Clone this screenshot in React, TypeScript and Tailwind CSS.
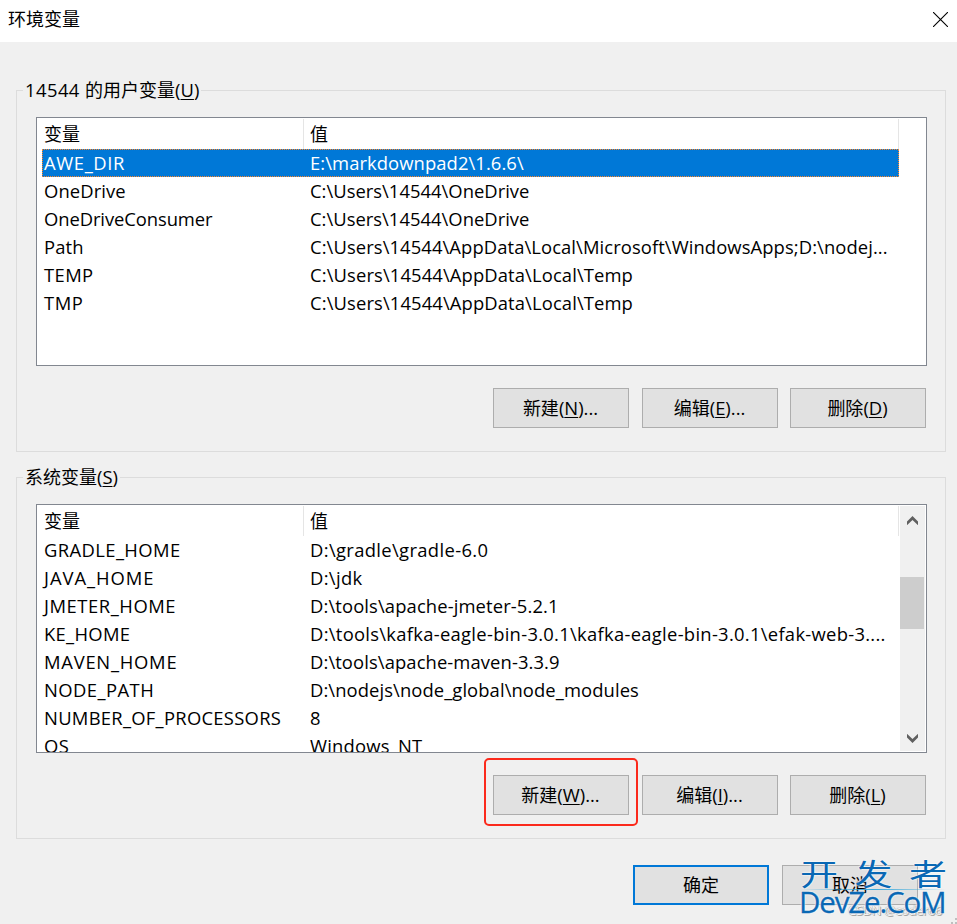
import type { ReactNode } from "react";
import clsx from "clsx";

interface EnvVar {
    name: string;
    nameClass?: string;
    value: string;
    valueClass?: string;
    selected?: boolean;
}

const userVars: EnvVar[] = [
    { name: "AWE_DIR", nameClass: "tracking-[0.6px]", value: "E:\\markdownpad2\\1.6.6\\", valueClass: "tracking-[0.08px]", selected: true },
    { name: "OneDrive", nameClass: "tracking-[0.1px]", value: "C:\\Users\\14544\\OneDrive", valueClass: "tracking-[0.02px]" },
    { name: "OneDriveConsumer", nameClass: "tracking-[-0.08px]", value: "C:\\Users\\14544\\OneDrive", valueClass: "tracking-[0.02px]" },
    { name: "Path", nameClass: "tracking-[0.15px]", value: "C:\\Users\\14544\\AppData\\Local\\Microsoft\\WindowsApps;D:\\nodej...", valueClass: "tracking-[0.09px]" },
    { name: "TEMP", nameClass: "tracking-[0.4px]", value: "C:\\Users\\14544\\AppData\\Local\\Temp", valueClass: "tracking-[0.12px]" },
    { name: "TMP", nameClass: "tracking-[0.6px]", value: "C:\\Users\\14544\\AppData\\Local\\Temp", valueClass: "tracking-[0.12px]" },
];

const systemVars: EnvVar[] = [
    { name: "GRADLE_HOME", nameClass: "tracking-[0.4px]", value: "D:\\gradle\\gradle-6.0", valueClass: "tracking-[0.35px]" },
    { name: "JAVA_HOME", nameClass: "tracking-[0.95px]", value: "D:\\jdk", valueClass: "tracking-[0.33px]" },
    { name: "JMETER_HOME", nameClass: "tracking-[0.55px]", value: "D:\\tools\\apache-jmeter-5.2.1", valueClass: "tracking-[0.12px]" },
    { name: "KE_HOME", nameClass: "tracking-[0.3px]", value: "D:\\tools\\kafka-eagle-bin-3.0.1\\kafka-eagle-bin-3.0.1\\efak-web-3....", valueClass: "tracking-[0.29px]" },
    { name: "MAVEN_HOME", nameClass: "tracking-[0.75px]", value: "D:\\tools\\apache-maven-3.3.9", valueClass: "tracking-[0.1px]" },
    { name: "NODE_PATH", nameClass: "tracking-[0.45px]", value: "D:\\nodejs\\node_global\\node_modules", valueClass: "tracking-[0.09px]" },
    { name: "NUMBER_OF_PROCESSORS", nameClass: "tracking-[0.28px]", value: "8" },
    { name: "OS", nameClass: "tracking-[0.5px]", value: "Windows_NT", valueClass: "tracking-[0.22px]" },
];

function VarList({ vars, scrollbar }: { vars: EnvVar[]; scrollbar?: boolean }) {
    return (
        <div className="flex h-[249px] overflow-hidden border border-[#828790] bg-white pt-px pl-[5px]">
            <div className="w-[857px] shrink-0">
                {/* 表头 */}
                <div className="flex h-[30px] items-center border-r border-[#e5e5e5] leading-[30px]">
                    <div className="w-[261px] pl-0.5">变量</div>
                    <div className="h-full flex-1 border-l border-[#e5e5e5] pl-[6px]">值</div>
                </div>
                {vars.map(v => (
                    <div
                        key={v.name}
                        className={clsx(
                            "flex h-7 items-center border text-[18.4px] leading-[26px] whitespace-nowrap",
                            v.selected ? "border-dotted border-[#ff8728] bg-[#0078d7] text-white" : "border-transparent"
                        )}
                    >
                        <div className={clsx("w-[267px] pl-px", v.nameClass)}>{v.name}</div>
                        <div className={v.valueClass}>{v.value}</div>
                    </div>
                ))}
            </div>
            {scrollbar && (
                <div className="ml-px flex h-[245px] w-[25px] flex-col items-center bg-[#f0f0f0] pt-[10px] pb-2">
                    <svg width="11" height="9" viewBox="0 0 11 9" fill="#606060">
                        <path d="M0 5.5 5.5 0 11 5.5V9.2L5.5 4 0 9.2Z" />
                    </svg>
                    <div className="mt-[52px] h-[52px] w-6 self-start bg-[#cdcdcd]" />
                    <svg className="mt-auto" width="11" height="9" viewBox="0 0 11 9" fill="#606060">
                        <path d="M0 3.5 5.5 9 11 3.5V-.2L5.5 5 0-.2Z" />
                    </svg>
                </div>
            )}
        </div>
    );
}

function Hotkey({ letter }: { letter: string }) {
    return <>(<u className="decoration-1 underline-offset-2">{letter}</u>)</>;
}

function Button({ label, hotkey, more, primary }: { label: string; hotkey?: string; more?: boolean; primary?: boolean }) {
    return (
        <button
            className={clsx(
                "flex h-10 w-[136px] items-center justify-center bg-[#e1e1e1]",
                primary ? "border-2 border-[#0078d7]" : "border border-[#adadad]",
                hotkey && "pr-px"
            )}
        >
            <span>{label}</span>
            {hotkey && (
                <span className="text-[18.4px]">
                    <Hotkey letter={hotkey} />
                    {more && "..."}
                </span>
            )}
        </button>
    );
}

function Group({ owner, title, hotkey, children }: { owner?: string; title: string; hotkey: string; children: ReactNode }) {
    return (
        <fieldset className="mx-4 h-[374px] w-[930px] border border-[#dcdcdc] px-[6px]">
            <legend className="h-[25px] pr-0.5 pl-[2px] leading-[23px] whitespace-pre">
                {owner && <span className="text-[18.4px] tracking-[0.45px]">{owner} </span>}
                {title}
                <span className="text-[18.4px]">
                    <Hotkey letter={hotkey} />
                </span>
            </legend>
            <div className="mt-[14px] ml-[13px] w-[891px]">{children}</div>
        </fieldset>
    );
}

function Watermark() {
    return (
        <div className="absolute top-[857px] left-[800px] h-[67px] w-[157px] whitespace-nowrap">
            <div className="absolute top-[46px] left-[48px] text-[13px] leading-[14px] tracking-[-0.4px] text-[#f4f4f4] [text-shadow:0_0_1px_#777,1px_1px_0_#aaa]">
                CSDN @coder66
            </div>
            <div className="absolute top-0 left-0 origin-top-left scale-y-[0.78] text-[38px] leading-[42px] tracking-[16.5px] text-[#0a68b4] [text-shadow:0_0_2px_#fff,0_0_2px_#fff]">
                开发者
            </div>
            <div className="absolute top-[32px] left-0 h-px w-[146px] bg-gradient-to-r from-transparent via-[#35a8dc] to-transparent" />
            <div className="absolute top-[29px] -left-px text-[29.5px] leading-[32px] tracking-[-1.15px] text-[#0a68b4] [-webkit-text-stroke:0.3px_#0a68b4] [text-shadow:0_0_2px_#fff,0_0_2px_#fff]">
                DevZe.CoM
            </div>
        </div>
    );
}

export default function App() {
    return (
        <div className="relative h-[924px] w-[957px] overflow-hidden bg-[#f0f0f0] font-['Open_Sans','Noto_Sans_CJK_SC',sans-serif] text-[18px] text-black [font-kerning:none]">
            {/* 标题栏 */}
            <div className="flex h-[42px] items-center justify-between bg-white pr-[9px] pb-[3px] pl-2">
                <span>环境变量</span>
                <svg width="15" height="15" viewBox="0 0 15 15" stroke="#000" strokeWidth="1.1">
                    <path d="M0 0 15 15M15 0 0 15" />
                </svg>
            </div>

            <div className="pt-9">
                <Group owner="14544" title="的用户变量" hotkey="U">
                    <VarList vars={userVars} />
                    <div className="mt-[22px] flex justify-end pr-px">
                        <Button label="新建" hotkey="N" more />
                        <div className="w-[13px]" />
                        <Button label="编辑" hotkey="E" more />
                        <div className="w-3" />
                        <Button label="删除" hotkey="D" />
                    </div>
                </Group>
            </div>
            <div className="pt-[13px]">
                <Group title="系统变量" hotkey="S">
                    <VarList vars={systemVars} scrollbar />
                    <div className="mt-[22px] flex justify-end pr-px">
                        <div className="relative">
                            <Button label="新建" hotkey="W" more />
                            <div className="absolute -top-[17px] -left-[9px] h-[68px] w-[154px] rounded-[5px] border-2 border-[#fb2a1c]" />
                        </div>
                        <div className="w-[13px]" />
                        <Button label="编辑" hotkey="I" more />
                        <div className="w-3" />
                        <Button label="删除" hotkey="L" />
                    </div>
                </Group>
            </div>

            {/* 底部按钮 */}
            <div className="mt-[26px] flex justify-end gap-[13px] pr-[39px]">
                <Button label="确定" primary />
                <Button label="取消" />
            </div>

            <Watermark />

            {/* 右下角拖拽手柄 */}
            <svg className="absolute right-0 bottom-0" width="6" height="6" viewBox="0 0 6 6" fill="#bfbfbf">
                <path d="M0 4h2v2H0zM4 0h2v2H4zM4 4h2v2H4z" />
            </svg>
        </div>
    );
}
